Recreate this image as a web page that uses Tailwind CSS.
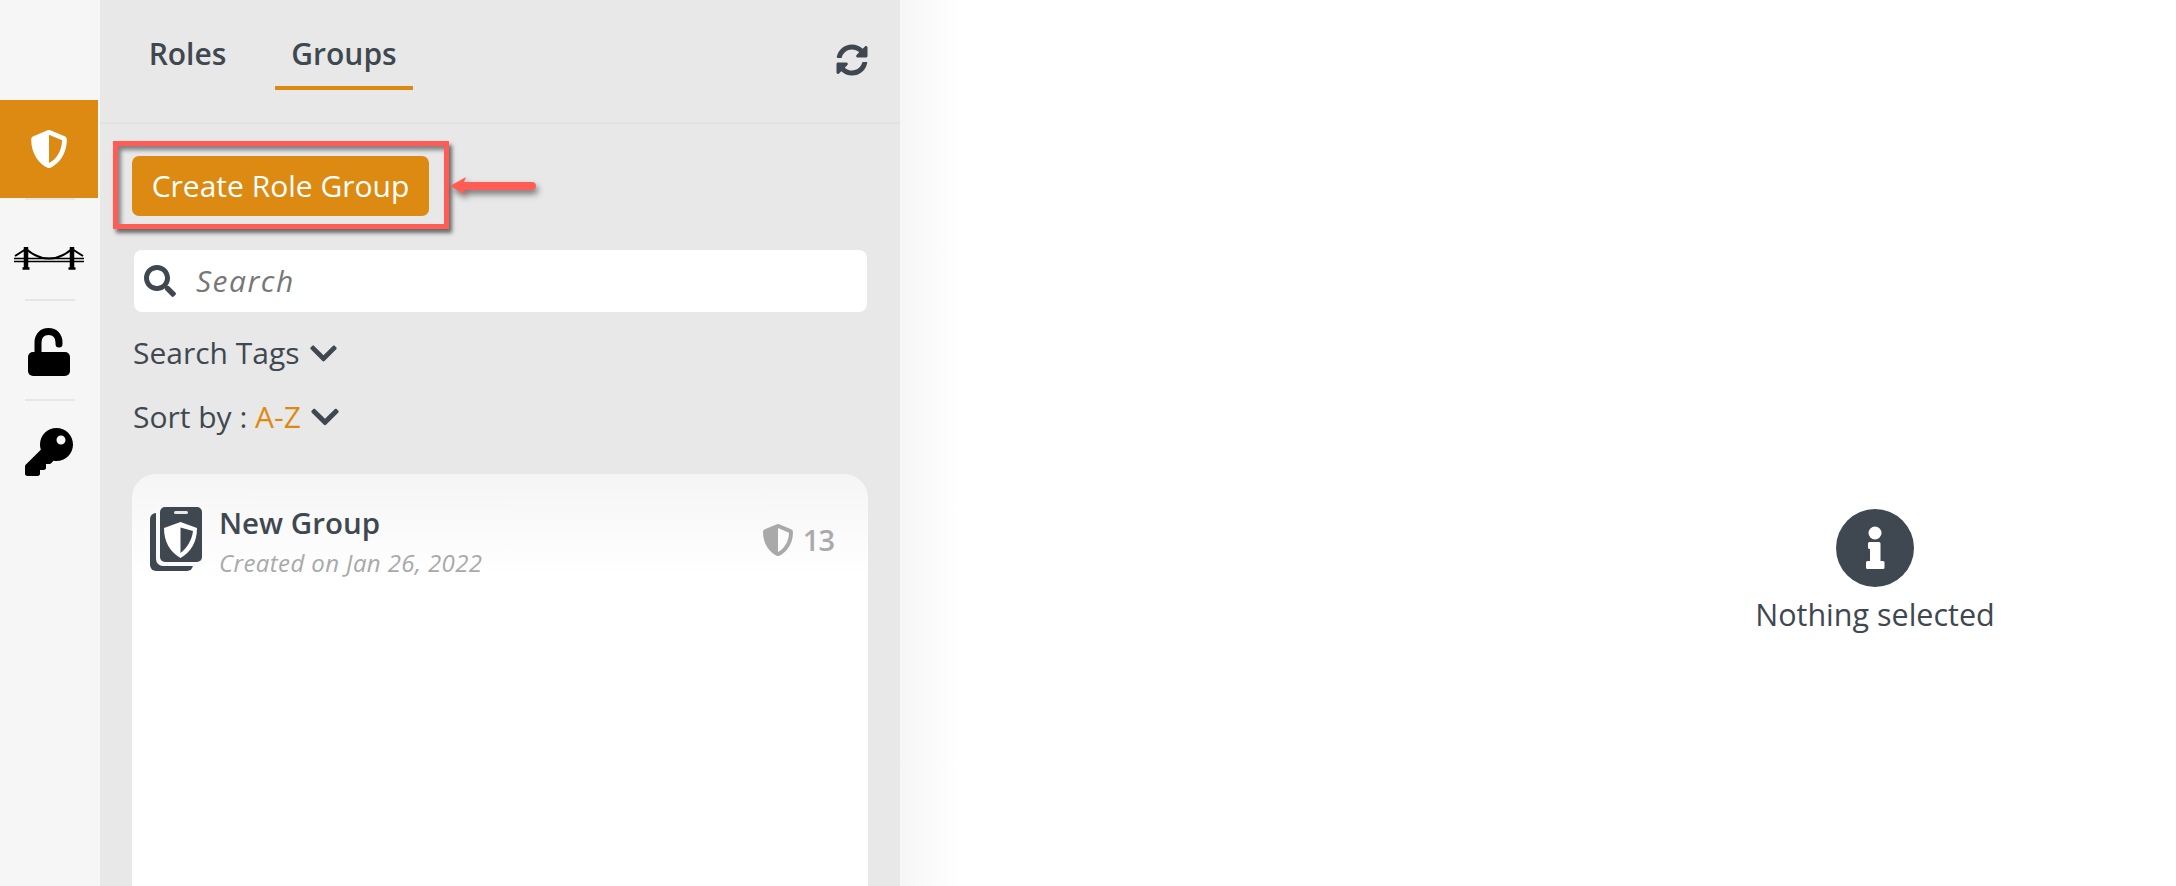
<!doctype html>
<html>
<head>
<meta charset="utf-8">
<script src="https://cdn.jsdelivr.net/npm/@tailwindcss/browser@4"></script>
</head>
<body class="m-0 overflow-hidden bg-white">
<div class="flex h-[886px] w-[2176px] overflow-hidden font-['Open_Sans','Lato',sans-serif] text-[#3f4850]">

  <!-- Sidebar -->
  <aside class="flex w-[100px] shrink-0 flex-col items-center bg-[#f6f6f6] pr-[2px] pt-[100px]">
    <div class="flex h-[98px] w-[98px] items-center justify-center self-start bg-[#dd8a12]">
      <svg class="h-[38px] w-[38px]" viewBox="0 0 512 512" fill="#fff"><path d="M466.5 83.7l-192-80a48.15 48.15 0 0 0-36.9 0l-192 80C27.7 91.1 16 108.6 16 128c0 198.5 114.500 335.700 221.500 380.300 11.800 4.900 25.100 4.900 36.900 0C360.100 472.600 496 349.300 496 128c0-19.400-11.700-36.900-29.500-44.300zM256.100 446.300l-.1-381 175.900 73.300c-3.300 151.400-82.100 261.100-175.800 307.700z"/></svg>
    </div>
    <div class="ml-[2px] h-[2px] w-[50px] bg-[#e6e6e6]"></div>
    <svg class="mt-[46px] h-[24px] w-[70px]" viewBox="0 0 70 24" fill="none" stroke="#000">
      <path d="M0 12.500H70M0 15.500H70" stroke-width="1.700"/>
      <path d="M12 3 C20 10 28 12.500 35 12.500 C42 12.500 50 10 58 3" stroke-width="2"/>
      <path d="M12 3 L1 10M58 3 L69 10" stroke-width="2"/>
      <path d="M12 1V22M58 1V22" stroke-width="4.500"/>
      <path d="M8.500 22.500H15.500M54.500 22.500H61.500" stroke-width="2.500"/>
    </svg>
    <div class="ml-[2px] mt-[29px] h-[2px] w-[50px] bg-[#e6e6e6]"></div>
    <svg class="mt-[27px] h-[48px] w-[42px]" viewBox="0 0 42 48">
      <path d="M10 25V14.500C10 8 14 3.500 20.500 3.500S31 8 31 14.500V16" fill="none" stroke="#000" stroke-width="7" stroke-linecap="round"/>
      <rect x="0" y="24" width="42" height="24" rx="5" fill="#000"/>
    </svg>
    <div class="ml-[2px] mt-[23px] h-[2px] w-[50px] bg-[#e6e6e6]"></div>
    <svg class="mt-[27px] h-[48px] w-[48px]" viewBox="0 0 512 512" fill="#000"><path d="M512 176.001C512 273.203 433.202 352 336 352c-11.220 0-22.190-1.062-32.827-3.069l-24.012 27.014A23.999 23.999 0 0 1 261.223 384H224v40c0 13.255-10.745 24-24 24h-40v40c0 13.255-10.745 24-24 24H24c-13.255 0-24-10.745-24-24v-78.059c0-6.365 2.529-12.470 7.029-16.971l161.802-161.802C163.108 213.814 160 195.271 160 176 160 78.798 238.797.001 335.999 0 433.488-.001 512 78.511 512 176.001zM336 128c0 26.510 21.490 48 48 48s48-21.490 48-48-21.490-48-48-48-48 21.490-48 48z"/></svg>
  </aside>

  <!-- List panel -->
  <section class="relative flex w-[800px] shrink-0 flex-col bg-[#e8e8e8]">
    <header class="flex h-[124px] shrink-0 items-start justify-between border-b-2 border-[#e3e3e3] pl-[32px] pr-[32px]">
      <nav class="flex gap-[32px]">
        <div class="flex h-[90px] w-[111px] items-start justify-center pt-[36px] text-[30px] leading-[36px] font-semibold">Roles</div>
        <div class="flex h-[90px] w-[138px] items-start justify-center border-b-4 border-[#dd8a12] pt-[36px] text-[30px] leading-[36px] font-semibold">Groups</div>
      </nav>
      <svg class="mt-[44px] h-[32px] w-[32px]" viewBox="0 0 512 512" fill="#3f4850"><path d="M370.720 133.280C339.458 104.008 298.888 87.962 255.848 88c-77.458.068-144.328 53.178-162.791 126.850-1.344 5.363-6.122 9.150-11.651 9.150H24.103c-7.498 0-13.194-6.807-11.807-14.176C33.933 94.924 134.813 8 256 8c66.448 0 126.791 26.136 171.315 68.685L463.030 40.970C478.149 25.851 504 36.559 504 57.941V192c0 13.255-10.745 24-24 24H345.941c-21.382 0-32.090-25.851-16.971-40.971l41.750-41.749zM32 296h134.059c21.382 0 32.090 25.851 16.971 40.971l-41.750 41.750c31.262 29.273 71.835 45.319 114.876 45.280 77.418-.070 144.315-53.144 162.787-126.849 1.344-5.363 6.122-9.150 11.651-9.150h57.304c7.498 0 13.194 6.807 11.807 14.176C478.067 417.076 377.187 504 256 504c-66.448 0-126.791-26.136-171.315-68.685L48.970 471.030C33.851 486.149 8 475.441 8 454.059V320c0-13.255 10.745-24 24-24z"/></svg>
    </header>

    <div class="flex flex-1 flex-col pl-[32px] pr-[32px]">
      <button class="mt-[32px] flex h-[60px] w-[297px] items-center justify-center rounded-[7px] bg-[#dd8a12] pb-[2px] text-[30px] text-white">Create Role Group</button>

      <div class="ml-[2px] mt-[34px] flex h-[62px] w-[733px] items-center rounded-[8px] bg-white pb-[1px] pl-[10px]">
        <svg class="h-[32px] w-[32px]" viewBox="0 0 512 512" fill="#3f4850"><path d="M505 442.700L405.300 343c-4.500-4.500-10.600-7-17-7H372c27.600-35.300 44-79.700 44-128C416 93.100 322.900 0 208 0S0 93.100 0 208s93.100 208 208 208c48.300 0 92.700-16.400 128-44v16.300c0 6.400 2.500 12.500 7 17l99.700 99.700c9.400 9.400 24.600 9.400 33.900 0l28.300-28.300c9.400-9.400 9.400-24.600.1-34zM208 336c-70.700 0-128-57.200-128-128 0-70.700 57.200-128 128-128 70.700 0 128 57.200 128 128 0 70.700-57.200 128-128 128z"/></svg>
        <span class="ml-[20px] text-[30px] italic tracking-[1.500px] text-[#777]">Search</span>
      </div>

      <div class="ml-[1px] mt-[22px] flex h-[38px] items-center gap-[10px] text-[30px] leading-[38px]">
        <span>Search Tags</span>
        <svg class="h-[31px] w-[27px]" viewBox="0 0 448 512" fill="#3f4850"><path d="M207.029 381.476L12.686 187.132c-9.373-9.373-9.373-24.569 0-33.941l22.667-22.667c9.357-9.357 24.522-9.375 33.901-.04L224 284.505l154.745-154.021c9.379-9.335 24.544-9.317 33.901.04l22.667 22.667c9.373 9.373 9.373 24.569 0 33.941L240.971 381.476c-9.373 9.372-24.569 9.372-33.942 0z"/></svg>
      </div>

      <div class="ml-[1px] mt-[26px] flex h-[38px] items-center text-[30px] leading-[38px]">
        <span>Sort by :&nbsp;</span>
        <span class="text-[#dd8a12]">A-Z</span>
        <svg class="ml-[10px] h-[32px] w-[28px]" viewBox="0 0 448 512" fill="#3f4850"><path d="M207.029 381.476L12.686 187.132c-9.373-9.373-9.373-24.569 0-33.941l22.667-22.667c9.357-9.357 24.522-9.375 33.901-.04L224 284.505l154.745-154.021c9.379-9.335 24.544-9.317 33.901.04l22.667 22.667c9.373 9.373 9.373 24.569 0 33.941L240.971 381.476c-9.373 9.372-24.569 9.372-33.942 0z"/></svg>
      </div>

      <article class="mt-[38px] flex-1 rounded-t-[24px] bg-gradient-to-b from-[#f5f5f5] from-0% to-white to-[103px]">
        <div class="flex items-start pl-[18px] pr-[34px] pt-[33px]">
          <svg class="h-[64px] w-[53px] shrink-0" viewBox="0 0 53 64">
            <rect x="0" y="6" width="43" height="58" rx="6" fill="#3f4850"/>
            <rect x="6" y="-2" width="49" height="61" rx="7" fill="#fafafa"/>
            <rect x="10" y="0" width="42" height="55" rx="5" fill="#3f4850"/>
            <rect x="24" y="4" width="14" height="3" rx="1.500" fill="#e8e8e8"/>
            <path d="M30.500 15 L14 21 C14 35 20 45 30.500 51 C41 45 47 35 47 21 Z" fill="#fff"/>
            <path d="M30.500 20.500 V46 C37 41 42 33 43 24 Z" fill="#3f4850"/>
          </svg>
          <div class="ml-[16px] flex-1">
            <div class="-mt-[2px] text-[29.500px] leading-[36px] font-semibold">New Group</div>
            <div class="mt-[8px] text-[24px] italic leading-[28px] tracking-[0.400px] text-[#a9a9a9]">Created on Jan 26, 2022</div>
          </div>
          <div class="mt-[17px] flex items-center gap-[9px]">
            <svg class="h-[32px] w-[32px]" viewBox="0 0 512 512" fill="#a9a9a9"><path d="M466.500 83.700l-192-80a48.150 48.150 0 0 0-36.900 0l-192 80C27.700 91.100 16 108.600 16 128c0 198.500 114.500 335.700 221.500 380.300 11.800 4.900 25.100 4.900 36.900 0C360.100 472.600 496 349.300 496 128c0-19.400-11.700-36.900-29.500-44.300zM256.100 446.300l-.1-381 175.900 73.300c-3.300 151.400-82.100 261.100-175.800 307.700z"/></svg>
            <span class="text-[29px] leading-[32px] font-semibold tracking-[-1px] text-[#aaaaaa]">13</span>
          </div>
        </div>
      </article>
    </div>

    <!-- Annotation -->
    <div class="pointer-events-none absolute left-[13px] top-[141px] h-[88px] w-[336px] border-[5px] border-[#ff5c55] shadow-[3px_4px_4px_rgba(0,0,0,0.55),inset_3px_4px_4px_rgba(0,0,0,0.45)]"></div>
    <svg class="pointer-events-none absolute left-[348px] top-[172px] h-[32px] w-[92px] overflow-visible drop-shadow-[2px_4px_3px_rgba(0,0,0,0.5)]" viewBox="0 0 92 32">
      <path d="M2 14 L18 5 L16 10 H84 A4 4 0 0 1 84 18 H16 L18 23 Z" fill="#ff5c55"/>
    </svg>
  </section>

  <!-- Detail -->
  <main class="relative flex-1 bg-gradient-to-r from-[#f6f6f6] to-white to-[60px]">
    <div class="ml-[825px] flex w-[300px] flex-col items-center pt-[509px]">
      <svg class="h-[78px] w-[78px]" viewBox="0 0 78 78">
        <circle cx="39" cy="39" r="39" fill="#3f4850"/>
        <circle cx="39" cy="24" r="6.500" fill="#fff"/>
        <path d="M32 34.500a1.500 1.500 0 0 1 1.500-1.500H43a1.500 1.500 0 0 1 1.500 1.500V52H47a1.500 1.500 0 0 1 1.500 1.500v5A1.500 1.500 0 0 1 47 60H31.500a1.500 1.500 0 0 1-1.500-1.500v-5a1.500 1.500 0 0 1 1.500-1.500H34V40h-.5a1.500 1.500 0 0 1-1.500-1.500z" fill="#fff"/>
      </svg>
      <div class="mt-[8px] whitespace-nowrap text-[30.500px] leading-[38px]">Nothing selected</div>
    </div>
  </main>
</div>
</body>
</html>
